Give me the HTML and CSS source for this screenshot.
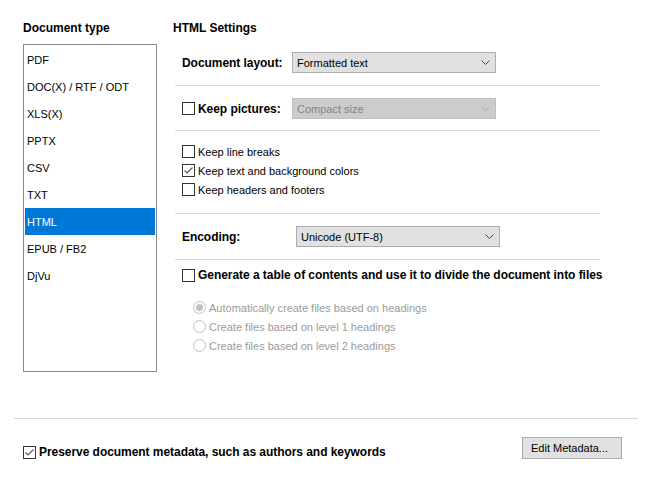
FILE: index.html
```html
<!DOCTYPE html>
<html lang="en">
<head>
<meta charset="utf-8">
<title>HTML Settings</title>
<link rel="stylesheet" href="styles.css">
</head>
<body>
<div class="dialog">
  <div class="main">
    <section class="types">
      <h2 class="heading">Document type</h2>
      <ul class="list">
        <li class="item">PDF</li>
        <li class="item">DOC(X) / RTF / ODT</li>
        <li class="item">XLS(X)</li>
        <li class="item">PPTX</li>
        <li class="item">CSV</li>
        <li class="item">TXT</li>
        <li class="item selected">HTML</li>
        <li class="item">EPUB / FB2</li>
        <li class="item">DjVu</li>
      </ul>
    </section>
    <section class="settings">
      <h2 class="heading">HTML Settings</h2>

      <div class="field first">
        <span class="label bold">Document layout:</span>
        <div class="select">
          <span>Formatted text</span>
          <svg class="chev" width="9" height="5" viewBox="0 0 9 5"><path d="M0.5 0.5 L4.5 4.5 L8.5 0.5" fill="none" stroke="#444" stroke-width="1"/></svg>
        </div>
      </div>
      <hr class="sep">

      <div class="field">
        <label class="label check-label bold"><span class="box"></span>Keep pictures:</label>
        <div class="select disabled">
          <span>Compact size</span>
          <svg class="chev" width="9" height="5" viewBox="0 0 9 5"><path d="M0.5 0.5 L4.5 4.5 L8.5 0.5" fill="none" stroke="#a8a8a8" stroke-width="1"/></svg>
        </div>
      </div>
      <hr class="sep sep-b">

      <div class="checks">
        <label class="check-row"><span class="box"></span>Keep line breaks</label>
        <label class="check-row"><span class="box"><svg width="11" height="11" viewBox="0 0 11 11"><path d="M1.5 5.5 L4 8 L9.5 2.5" fill="none" stroke="#555" stroke-width="1.1"/></svg></span>Keep text and background colors</label>
        <label class="check-row"><span class="box"></span>Keep headers and footers</label>
      </div>
      <hr class="sep sep-c">

      <div class="field">
        <span class="label label-wide bold">Encoding:</span>
        <div class="select">
          <span>Unicode (UTF-8)</span>
          <svg class="chev" width="9" height="5" viewBox="0 0 9 5"><path d="M0.5 0.5 L4.5 4.5 L8.5 0.5" fill="none" stroke="#444" stroke-width="1"/></svg>
        </div>
      </div>
      <hr class="sep">

      <label class="check-row generate bold"><span class="box"></span>Generate a table of contents and use it to divide the document into files</label>

      <div class="radios">
        <label class="radio-row"><span class="radio on"></span>Automatically create files based on headings</label>
        <label class="radio-row"><span class="radio"></span>Create files based on level 1 headings</label>
        <label class="radio-row"><span class="radio"></span>Create files based on level 2 headings</label>
      </div>
    </section>
  </div>

  <footer class="footer">
    <label class="check-row preserve bold"><span class="box"><svg width="11" height="11" viewBox="0 0 11 11"><path d="M1.5 5.5 L4 8 L9.5 2.5" fill="none" stroke="#555" stroke-width="1.1"/></svg></span>Preserve document metadata, such as authors and keywords</label>
    <button class="button" type="button">Edit Metadata...</button>
  </footer>
</div>
</body>
</html>
```

FILE: styles.css
```css
* {
  box-sizing: border-box;
}

html, body {
  margin: 0;
  padding: 0;
  background: #ffffff;
}

body {
  font-family: "Liberation Sans", Tahoma, Arial, sans-serif;
  font-size: 11px;
  color: #000000;
  width: 654px;
  height: 478px;
  overflow: hidden;
}

.dialog {
  display: flex;
  flex-direction: column;
}

.main {
  display: flex;
  padding: 20px 0 0 23px;
  gap: 16px;
}

.heading {
  margin: 0;
  padding-top: 1px;
  font-size: 12px;
  font-weight: bold;
  line-height: 14px;
  height: 14px;
}

.bold {
  font-weight: bold;
  font-size: 12px;
  letter-spacing: -0.05px;
}

/* Left list */
.types {
  width: 134px;
  flex: none;
}

.list {
  list-style: none;
  margin: 10px 0 0 0;
  padding: 1px;
  height: 328px;
  border: 1px solid #828790;
}

.item {
  height: 27px;
  line-height: 27px;
  padding: 1px 0 0 2px;
  white-space: nowrap;
}

.item.selected {
  background: #0078d7;
  color: #ffffff;
}

/* Right column */
.settings {
  width: 440px;
  flex: none;
}

.field {
  display: flex;
  align-items: center;
  height: 21px;
  padding-left: 9px;
  margin-top: 12px;
}

.field.first {
  margin-top: 18px;
}

.label {
  width: 110px;
  flex: none;
  white-space: nowrap;
}

.label-wide {
  width: 114px;
}

.select {
  width: 204px;
  height: 21px;
  display: flex;
  align-items: center;
  justify-content: space-between;
  padding: 0 5px 0 4px;
  background: #e1e1e1;
  border: 1px solid #adadad;
  white-space: nowrap;
}

.select.disabled {
  background: #cccccc;
  border-color: #bfbfbf;
  color: #838383;
}

.chev {
  display: block;
  flex: none;
}

.sep {
  margin: 12px 0 0 2px;
  width: 425px;
  height: 1px;
  border: none;
  background: #d3d9df;
}

.sep-b {
  margin-top: 11px;
}

.sep-c {
  margin-top: 14px;
}

.check-label {
  display: flex;
  align-items: center;
}

.box {
  width: 13px;
  height: 13px;
  flex: none;
  border: 1px solid #333333;
  background: #ffffff;
  margin-right: 3px;
  display: flex;
  align-items: center;
  justify-content: center;
}

.box svg {
  display: block;
}

.checks {
  margin-top: 11px;
  padding-left: 9px;
}

.check-row {
  display: flex;
  align-items: center;
  height: 19px;
  white-space: nowrap;
}

.generate {
  margin-top: 7px;
  height: 16px;
  padding-left: 9px;
}

.radios {
  margin-top: 15px;
  padding-left: 20px;
}

.radio-row {
  display: flex;
  align-items: center;
  height: 19px;
  color: #9a9a9a;
  white-space: nowrap;
}

.radio {
  width: 13px;
  height: 13px;
  flex: none;
  border: 1px solid #c2c2c2;
  border-radius: 50%;
  background: #ffffff;
  margin-right: 3px;
  display: flex;
  align-items: center;
  justify-content: center;
}

.radio.on::after {
  content: "";
  width: 7px;
  height: 7px;
  border-radius: 50%;
  background: #c2c2c2;
}

/* Footer */
.footer {
  margin: 46px 0 0 14px;
  width: 624px;
  border-top: 1px solid #d3d9df;
  display: flex;
  justify-content: space-between;
  align-items: flex-start;
  padding: 18px 16px 0 9px;
}

.preserve {
  margin-top: 7px;
  height: 16px;
}

.button {
  width: 100px;
  height: 22px;
  padding: 0 0 0 8px;
  text-align: left;
  font-family: "Liberation Sans", Tahoma, Arial, sans-serif;
  font-size: 11px;
  color: #000000;
  background: #e1e1e1;
  border: 1px solid #adadad;
  border-radius: 0;
}
```
